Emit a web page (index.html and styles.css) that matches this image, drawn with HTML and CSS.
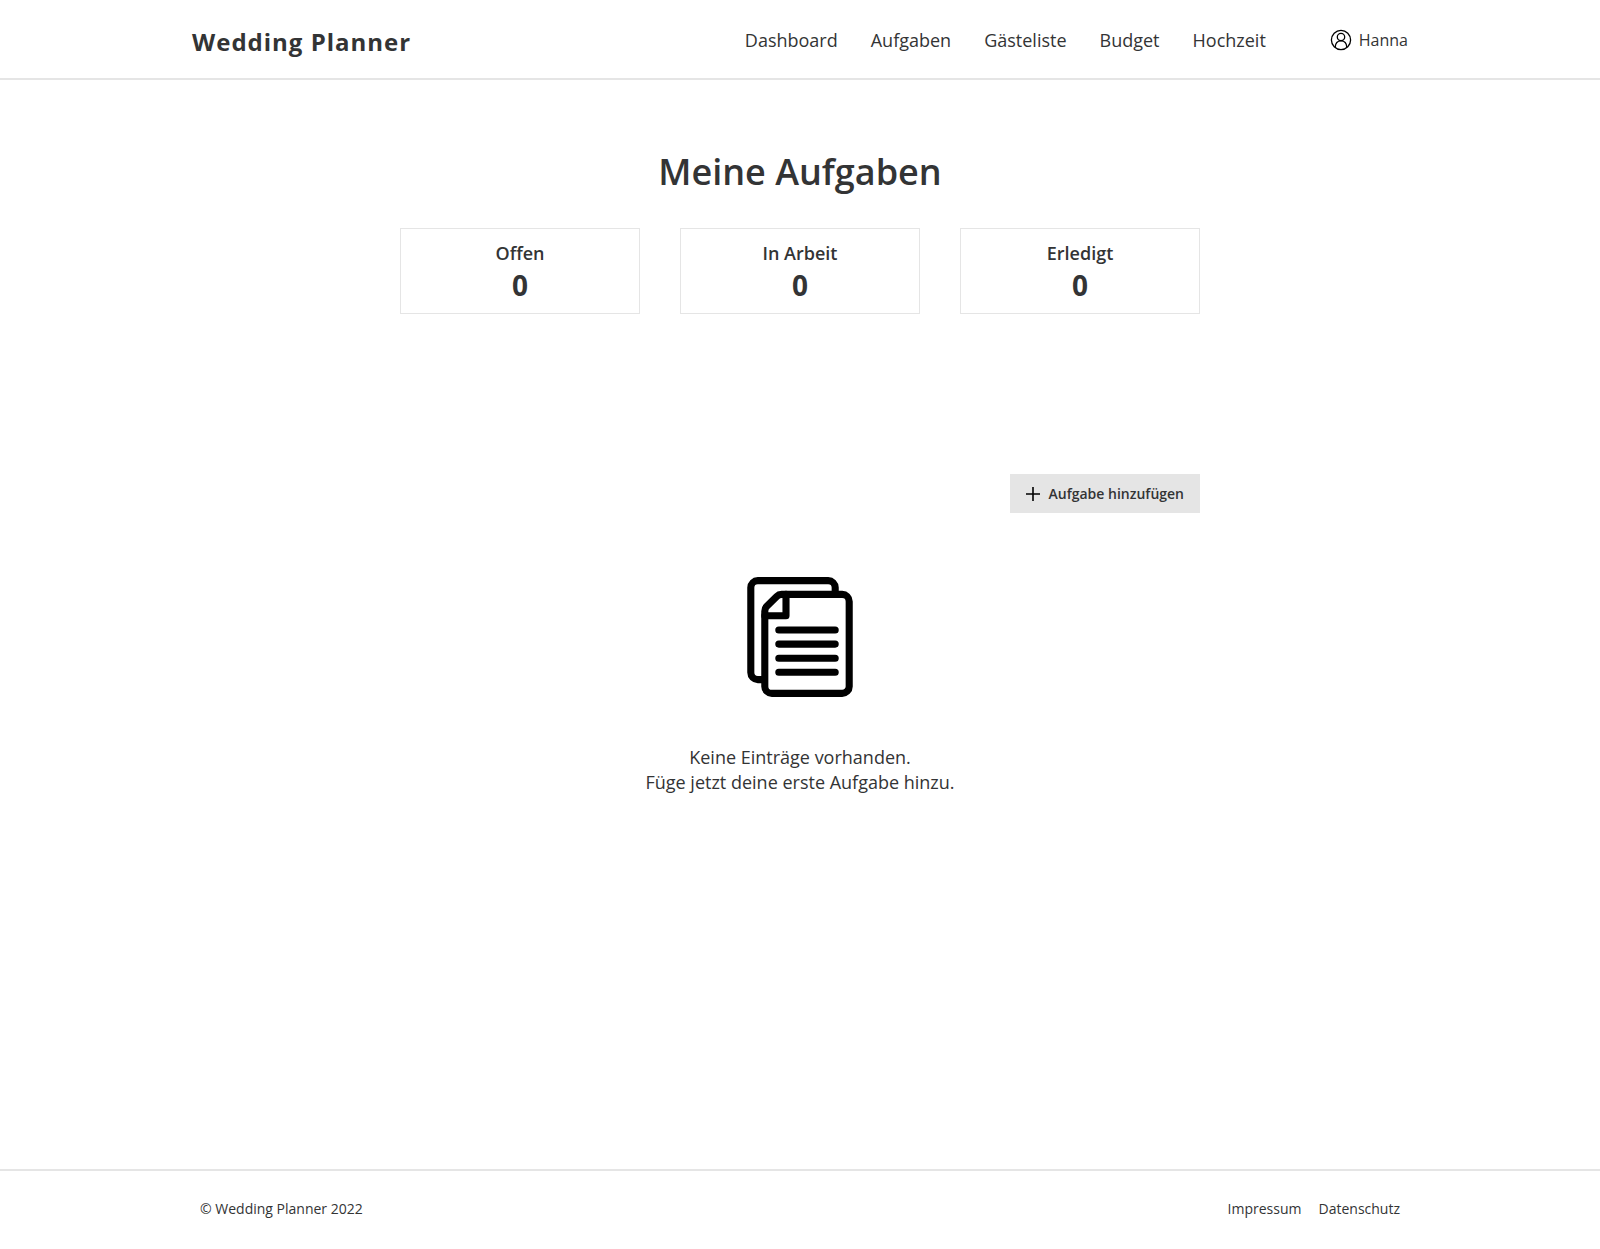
FILE: index.html
```html
<!DOCTYPE html>
<html lang="de">
<head>
  <meta charset="utf-8">
  <meta name="viewport" content="width=device-width, initial-scale=1">
  <title>Meine Aufgaben – Wedding Planner</title>
  <link rel="stylesheet" href="styles.css">
</head>
<body>
  <header class="site-header">
    <div class="header-inner">
      <a class="brand" href="#">Wedding Planner</a>
      <nav class="main-nav" aria-label="Hauptnavigation">
        <a href="#">Dashboard</a>
        <a href="#">Aufgaben</a>
        <a href="#">Gästeliste</a>
        <a href="#">Budget</a>
        <a href="#">Hochzeit</a>
      </nav>
      <a class="user" href="#">
        <svg class="user-icon" viewBox="0 0 22 22" aria-hidden="true">
          <circle cx="11" cy="11" r="9.6"/>
          <circle cx="11" cy="8" r="3.7"/>
          <path d="M5.2 18.2C5.4 14.3 7.7 11.8 11 11.8s5.6 2.5 5.8 6.4"/>
        </svg>
        <span>Hanna</span>
      </a>
    </div>
  </header>

  <main class="content">
    <h1 class="title">Meine Aufgaben</h1>
    <dl class="stats">
      <div class="stat"><dt>Offen</dt><dd>0</dd></div>
      <div class="stat"><dt>In Arbeit</dt><dd>0</dd></div>
      <div class="stat"><dt>Erledigt</dt><dd>0</dd></div>
    </dl>

    <button class="add-button" type="button">
      <svg class="plus-icon" viewBox="0 0 14 14" aria-hidden="true">
        <path d="M7 0v14M0 7h14"/>
      </svg>
      <span>Aufgabe hinzufügen</span>
    </button>

    <section class="empty">
      <svg class="empty-icon" viewBox="0 0 120 120" aria-hidden="true">
        <path class="butt" d="M24.8 102.6h-7a7 7 0 0 1-7-7V10.6a7 7 0 0 1 7-7h70.4a7 7 0 0 1 7 7v6.7"/>
        <path d="M41.6 17.4h60.6a7 7 0 0 1 7 7v85a7 7 0 0 1-7 7H31.8a7 7 0 0 1-7-7V34.2q0-2.9 2-4.9l9.9-9.9q2-2 4.9-2z"/>
        <path d="M46 17.4v21.3H24.8"/>
        <path d="M38.8 53h56.4M38.8 67.1h56.4M38.8 81.2h56.4M38.8 95.3h56.4"/>
      </svg>
      <p>Keine Einträge vorhanden.<br>Füge jetzt deine erste Aufgabe hinzu.</p>
    </section>
  </main>

  <footer class="site-footer">
    <div class="footer-inner">
      <span>© Wedding Planner 2022</span>
      <nav class="footer-nav" aria-label="Rechtliches">
        <a href="#">Impressum</a>
        <a href="#">Datenschutz</a>
      </nav>
    </div>
  </footer>
</body>
</html>
```

FILE: styles.css
```css
* {
  box-sizing: border-box;
}

body {
  display: flex;
  flex-direction: column;
  min-height: 100vh;
  margin: 0;
  background: #fff;
  color: #333435;
  font-family: "Open Sans", "Noto Sans", sans-serif;
  font-size: 18px;
}

a {
  color: inherit;
  text-decoration: none;
}

.site-header {
  border-bottom: 2px solid #e5e5e5;
}

.header-inner {
  display: flex;
  align-items: flex-start;
  max-width: 1216px;
  margin: 0 auto;
  padding: 24px 0 18px;
  line-height: 32px;
}

.brand {
  margin-right: auto;
  font-size: 24px;
  font-weight: 700;
  line-height: 36px;
  letter-spacing: 1px;
}

.main-nav {
  display: flex;
  gap: 33px;
}

.user {
  display: flex;
  align-items: center;
  gap: 7px;
  margin-left: 64px;
  font-size: 16px;
}

.user-icon {
  width: 22px;
  height: 22px;
  fill: none;
  stroke: #000;
  stroke-width: 1.3;
}

.content {
  display: flex;
  flex: 1;
  flex-direction: column;
  width: 100%;
  max-width: 800px;
  margin: 0 auto;
  padding: 66px 0;
}

.title {
  margin: 0 0 30px;
  font-size: 36px;
  font-weight: 600;
  line-height: 52px;
  text-align: center;
}

.stats {
  display: grid;
  grid-template-columns: repeat(3, 1fr);
  gap: 40px;
  margin: 0 0 160px;
}

.stat {
  padding: 12px 16px 8px;
  border: 1px solid #e5e5e5;
  text-align: center;
}

.stat dt {
  font-weight: 600;
  line-height: 24px;
}

.stat dd {
  margin: 0;
  font-size: 28px;
  font-weight: 700;
  line-height: 40px;
}

.add-button {
  display: flex;
  align-items: center;
  align-self: flex-end;
  gap: 9px;
  padding: 10px 16px;
  border: 0;
  background: #e5e5e5;
  color: inherit;
  font-family: inherit;
  font-size: 14px;
  font-weight: 600;
  line-height: 19px;
  cursor: pointer;
}

.plus-icon {
  width: 14px;
  height: 14px;
  fill: none;
  stroke: #000;
  stroke-width: 1.6;
}

.empty {
  display: flex;
  flex-direction: column;
  align-items: center;
  gap: 48px;
  margin-top: 64px;
  line-height: 25px;
  text-align: center;
}

.empty p {
  margin: 0;
}

.empty-icon {
  width: 120px;
  height: 120px;
  fill: none;
  stroke: #000;
  stroke-width: 7.1;
  stroke-linecap: round;
  stroke-linejoin: round;
}

.empty-icon .butt {
  stroke-linecap: butt;
}

.site-footer {
  border-top: 2px solid #e5e5e5;
}

.footer-inner {
  display: flex;
  justify-content: space-between;
  max-width: 1200px;
  margin: 0 auto;
  padding: 28px 0 30px;
  font-size: 14px;
  line-height: 20px;
}

.footer-nav {
  display: flex;
  gap: 17px;
}
```
